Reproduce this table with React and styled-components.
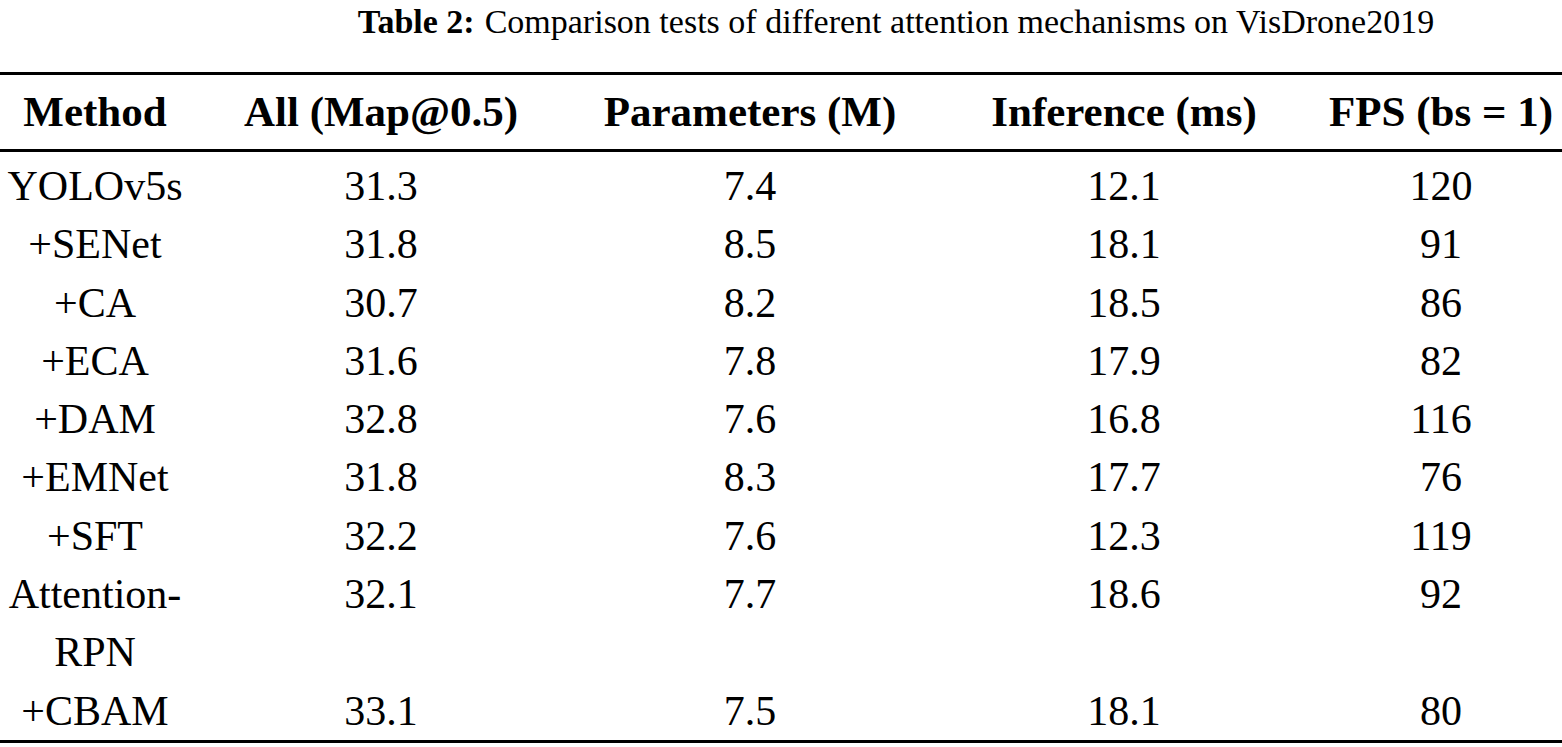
import React from "react";
import styled, { createGlobalStyle } from "styled-components";

const GlobalStyle = createGlobalStyle`
  html, body {
    margin: 0;
    padding: 0;
    background: #fff;
  }
  body {
    font-family: "Liberation Serif", "Times New Roman", serif;
    color: #000;
  }
`;

const Page = styled.div`
  width: 1562px;
  height: 747px;
  overflow: hidden;
  background: #fff;
`;

const Caption = styled.div`
  text-align: center;
  font-size: 34px;
  line-height: 44px;
  padding-left: 230px;
  height: 72px;
  box-sizing: border-box;
  b {
    font-weight: bold;
    margin-right: 10px;
  }
`;

const Table = styled.table`
  width: 1562px;
  border-collapse: collapse;
  table-layout: fixed;
  border-top: 3px solid #000;
  border-bottom: 3px solid #000;
`;

const HeadCell = styled.th`
  font-weight: bold;
  font-size: 43px;
  line-height: 44px;
  height: 74px;
  padding: 0 2px;
  text-align: center;
  white-space: nowrap;
  border-bottom: 3px solid #000;
`;

const Cell = styled.td`
  font-size: 42px;
  line-height: 58.3px;
  padding: ${(p) => (p.first ? "5px" : "0")} 3px 0;
  text-align: center;
  vertical-align: top;
`;

const columns = [
  { label: "Method", width: 190 },
  { label: "All (Map@0.5)", width: 382 },
  { label: "Parameters (M)", width: 356 },
  { label: "Inference (ms)", width: 392 },
  { label: "FPS (bs = 1)", width: 242 },
];

const rows = [
  ["YOLOv5s", "31.3", "7.4", "12.1", "120"],
  ["+SENet", "31.8", "8.5", "18.1", "91"],
  ["+CA", "30.7", "8.2", "18.5", "86"],
  ["+ECA", "31.6", "7.8", "17.9", "82"],
  ["+DAM", "32.8", "7.6", "16.8", "116"],
  ["+EMNet", "31.8", "8.3", "17.7", "76"],
  ["+SFT", "32.2", "7.6", "12.3", "119"],
  ["Attention-RPN", "32.1", "7.7", "18.6", "92"],
  ["+CBAM", "33.1", "7.5", "18.1", "80"],
];

export default function App() {
  return (
    <Page>
      <GlobalStyle />
      <Caption>
        <b>Table 2:</b>Comparison tests of different attention mechanisms on VisDrone2019
      </Caption>
      <Table>
        <colgroup>
          {columns.map((c) => (
            <col key={c.label} style={{ width: c.width }} />
          ))}
        </colgroup>
        <thead>
          <tr>
            {columns.map((c) => (
              <HeadCell key={c.label}>{c.label}</HeadCell>
            ))}
          </tr>
        </thead>
        <tbody>
          {rows.map((r, i) => (
            <tr key={r[0]}>
              {r.map((v, j) => (
                <Cell key={j} first={i === 0}>
                  {v}
                </Cell>
              ))}
            </tr>
          ))}
        </tbody>
      </Table>
    </Page>
  );
}
